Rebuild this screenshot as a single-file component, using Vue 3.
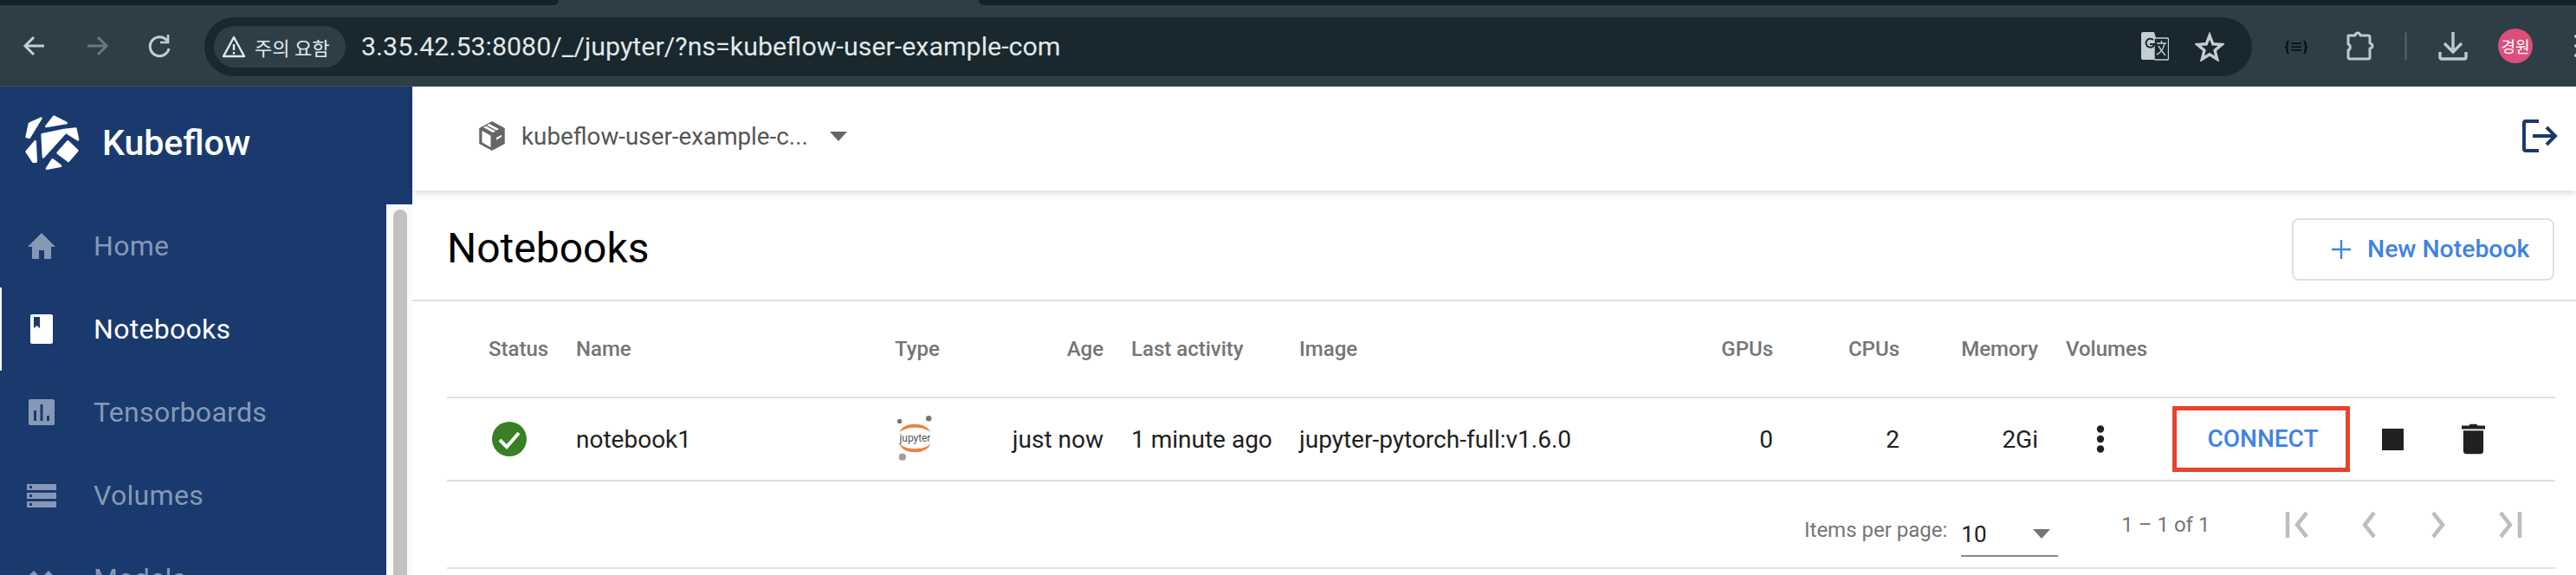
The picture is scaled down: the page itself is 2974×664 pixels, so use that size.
<script setup>
const headers = [
  { label: 'Status', cls: 'pad' },
  { label: 'Name' },
  { label: 'Type' },
  { label: 'Age', cls: 'right' },
  { label: 'Last activity' },
  { label: 'Image' },
  { label: 'GPUs', cls: 'right' },
  { label: 'CPUs', cls: 'right' },
  { label: 'Memory', cls: 'right' },
  { label: 'Volumes' },
  { label: '' }
]
</script>

<template>
  <div class="page">
    <div class="tabstrip">
      <div class="strip-dark strip-left"></div>
      <div class="strip-tab"></div>
      <div class="strip-dark strip-right"></div>
    </div>
    <div class="toolbar">
      <div class="nav-icons">
        <svg class="ic" viewBox="0 0 30 30" fill="none" stroke="#c2cfd4" stroke-width="3"><path d="M26 15H5M14 5L4 15l10 10"/></svg>
        <svg class="ic" viewBox="0 0 30 30" fill="none" stroke="#68787f" stroke-width="3"><path d="M4 15h21M16 5l10 10-10 10"/></svg>
        <svg class="ic" viewBox="0 0 30 30" fill="none" stroke="#c2cfd4" stroke-width="3"><path d="M24 9a11 11 0 1 0 2 9"/><path d="M25 2v9h-9" stroke-width="2.6"/></svg>
      </div>
      <div class="omnibox">
        <div class="chip">
          <svg class="warn" viewBox="0 0 28 28" fill="none" stroke="#e3e8ea" stroke-width="2.4"><path d="M14 3L2 25h24z" stroke-linejoin="round"/><path d="M14 11v7M14 20v2.5"/></svg>
          <span>주의 요함</span>
        </div>
        <span class="url">3.35.42.53:8080/_/jupyter/?ns=kubeflow-user-example-com</span>
        <svg class="translate" viewBox="0 0 32 33">
          <path d="M2 0h13l9 32H2a2 2 0 0 1-2-2V2a2 2 0 0 1 2-2z" fill="#c5cdd1"/>
          <rect x="15" y="7" width="16.5" height="25" rx="1.5" fill="#18282e" stroke="#c5cdd1" stroke-width="1.4"/>
          <path d="M14 9a5 5 0 1 0 1.4 5H10" fill="none" stroke="#18282e" stroke-width="2"/>
          <path d="M18 13h11M23.500 10v3M27 13c-1 6-5 11-9 13M20 16c2 4 5 8 8 11" fill="none" stroke="#c5cdd1" stroke-width="1.5"/>
        </svg>
        <svg class="star" viewBox="0 0 34 34" fill="none" stroke="#c5cdd1" stroke-width="3.400"><path d="M17 4l3.800 9.800 10.200.7-7.900 6.700 2.600 10.100L17 25.700 8.300 31.300l2.600-10.100L3 14.500l10.200-.7z"/></svg>
      </div>
      <div class="ext-icons">
        <span class="ext-code">{≡}</span>
        <svg class="puzzle" viewBox="0 0 34 34" fill="none" stroke="#b9cbd2" stroke-width="3"><path d="M4 5h8c1-4 5-4 6 0h9a2 2 0 0 1 2 2v7c4 1 4 5 0 6v10a2 2 0 0 1-2 2H6a2 2 0 0 1-2-2v-8c3-1 3-6 0-7z" stroke-linejoin="round"/></svg>
        <div class="sep"></div>
        <svg class="download" viewBox="0 0 34 34" fill="none" stroke="#b9cbd2" stroke-width="3.400"><path d="M17 1v22M7 14l10 10 10-10"/><path d="M2 24v6a2 2 0 0 0 2 2h26a2 2 0 0 0 2-2v-6"/></svg>
        <div class="avatar">경원</div>
        <div class="dots"><i></i><i></i><i></i></div>
      </div>
    </div>

    <div class="body">
      <aside class="sidebar">
        <div class="brand">
          <svg class="logo" viewBox="0 0 300 270" fill="#fff" stroke="#fff" stroke-width="8" stroke-linejoin="round">
            <polygon points="72,68 112,50 72,116 62,114"/>
            <polygon points="157,44 200,66 130,78"/>
            <polygon points="116,106 192,90 232,86 240,124 198,98 120,184"/>
            <polygon points="205,130 238,162 207,198 170,170"/>
            <polygon points="92,130 95,200 85,200 62,165"/>
            <polygon points="152,193 180,215 132,224"/>
          </svg>
          <span class="brand-name">Kubeflow</span>
        </div>
        <div class="side-rest">
          <nav class="nav">
            <div class="nav-item">
              <svg class="nav-ic" viewBox="0 0 34 34" fill="#8599b7"><path d="M17 2L1 18h5v14h8V22h6v10h8V18h5z"/></svg>
              <span>Home</span>
            </div>
            <div class="nav-item active">
              <svg class="nav-ic" viewBox="0 0 34 34"><path d="M6 0h22a2 2 0 0 1 2 2v30a2 2 0 0 1-2 2H6a2 2 0 0 1-2-2V2a2 2 0 0 1 2-2z" fill="#fff"/><path d="M8 3h7v13l-3.500-3L8 16z" fill="#1a3a6e"/></svg>
              <span>Notebooks</span>
            </div>
            <div class="nav-item">
              <svg class="nav-ic" viewBox="0 0 34 34"><rect x="2" y="2" width="30" height="30" rx="2" fill="#8599b7"/><path d="M8 15h3v12H8zM15.500 8h3v19h-3zM23 21h3v6h-3z" fill="#1a3a6e"/></svg>
              <span>Tensorboards</span>
            </div>
            <div class="nav-item">
              <svg class="nav-ic" viewBox="0 0 34 34" fill="#8599b7"><path d="M0 4h34v7H0zM0 14h34v7H0zM0 24h34v7H0z"/><path d="M3 6h3v3H3zM3 16h3v3H3zM3 26h3v3H3z" fill="#1a3a6e"/></svg>
              <span>Volumes</span>
            </div>
            <div class="nav-item">
              <svg class="nav-ic" viewBox="0 0 34 34" fill="#8599b7"><path d="M8 8l6 6H2zM25 8l6 6H19z"/></svg>
              <span>Models</span>
            </div>
          </nav>
          <div class="scroll-track"><div class="scroll-thumb"></div></div>
        </div>
      </aside>

      <main class="main">
        <header class="topbar">
          <svg class="box-ic" viewBox="0 0 32 34">
            <path d="M16 1L30 8.500V25.500L16 33 2 25.500V8.500z" fill="#666" stroke="#666" stroke-width="1.500" stroke-linejoin="round"/>
            <path d="M4.500 11l10 5.500v13.500l-10-5.500z" fill="#fff"/>
            <path d="M10 4.500l11 6 3-1.500-11-6zM6 7l11 6 3-1.500-11-6z" fill="#fff"/>
            <path d="M21 19l6-3.200v2.500l-6 3.200z" fill="#fff"/>
          </svg>
          <span class="ns">kubeflow-user-example-c...</span>
          <span class="ns-arrow"></span>
          <svg class="logout" viewBox="0 0 42 38" fill="none" stroke="#1a3a6e" stroke-width="4"><path d="M20 2H5a2 2 0 0 0-2 2v30a2 2 0 0 0 2 2h15"/><path d="M13 19h26M29 9l10 10-10 10"/></svg>
        </header>

        <div class="title-row">
          <h1>Notebooks</h1>
          <button class="new-btn">
            <svg class="plus" viewBox="0 0 24 24" fill="none" stroke="#3f83e0" stroke-width="2.400"><path d="M12 1v22M1 12h22"/></svg>
            New Notebook
          </button>
        </div>

        <div class="table">
          <div class="row head">
            <div v-for="h in headers" :key="h.label" class="cell" :class="h.cls">{{ h.label }}</div>
          </div>
          <div class="row item">
            <div class="cell pad-icon">
              <svg class="check" viewBox="0 0 40 40"><circle cx="20" cy="20" r="20" fill="#388023"/><path d="M9 21l8 8 14-16" fill="none" stroke="#fff" stroke-width="4"/></svg>
            </div>
            <div class="cell">notebook1</div>
            <div class="cell">
              <svg class="jupyter" viewBox="0 0 44 48">
                <path d="M5 18C8 6 34 6 38 18 31 11 12 11 5 18zM5 30c3 12 29 12 33 0-7 7-26 7-33 0z" fill="#e8843c"/>
                <circle cx="5" cy="6" r="2.500" fill="#767677"/>
                <circle cx="36" cy="3" r="3" fill="#767677"/>
                <circle cx="8" cy="44" r="3.800" fill="#9e9e9e"/>
                <text x="21.500" y="28" text-anchor="middle" class="jup-text">jupyter</text>
              </svg>
            </div>
            <div class="cell right">just now</div>
            <div class="cell">1 minute ago</div>
            <div class="cell">jupyter-pytorch-full:v1.6.0</div>
            <div class="cell right">0</div>
            <div class="cell right">2</div>
            <div class="cell right">2Gi</div>
            <div class="cell">
              <svg class="kebab" viewBox="0 0 10 32" fill="#212121"><circle cx="5" cy="4.500" r="4.200"/><circle cx="5" cy="16" r="4.200"/><circle cx="5" cy="27.500" r="4.200"/></svg>
            </div>
            <div class="cell actions">
              <div class="connect">CONNECT</div>
              <div class="stop"></div>
              <svg class="trash" viewBox="0 0 28 36" fill="#212121"><path d="M10 0h8l1 2h9v4H0V2h9zM2 8h24v24a4 4 0 0 1-4 4H6a4 4 0 0 1-4-4z"/></svg>
            </div>
          </div>
          <div class="footer">
            <span class="per-label">Items per page:</span>
            <div class="select">
              <span>10</span>
              <span class="select-arrow"></span>
            </div>
            <span class="range">1 – 1 of 1</span>
            <div class="pager">
              <svg viewBox="0 0 36 30" fill="none" stroke="#bdbdbd" stroke-width="4.500"><path d="M4 0v30M26 1L15 15l11 14"/></svg>
              <svg viewBox="0 0 36 30" fill="none" stroke="#bdbdbd" stroke-width="4.500"><path d="M24 1L13 15l11 14"/></svg>
              <svg viewBox="0 0 36 30" fill="none" stroke="#bdbdbd" stroke-width="4.500"><path d="M12 1l11 14-11 14"/></svg>
              <svg viewBox="0 0 36 30" fill="none" stroke="#bdbdbd" stroke-width="4.500"><path d="M10 1l11 14-11 14M32 0v30"/></svg>
            </div>
          </div>
        </div>
      </main>
    </div>
  </div>
</template>

<style>
html, body {
  margin: 0;
  background: #fff;
  overflow: hidden;
}
</style>

<style scoped>
.page {
  width: 2974px;
  height: 664px;
  overflow: hidden;
  display: flex;
  flex-direction: column;
  font-family: Roboto, "Noto Sans CJK KR", sans-serif;
}

.tabstrip {
  height: 6px;
  display: flex;
  background: #2d3e46;
}
.strip-dark {
  background: #112329;
}
.strip-left {
  width: 645px;
  border-bottom-right-radius: 6px;
}
.strip-tab {
  width: 485px;
}
.strip-right {
  flex: 1;
  border-bottom-left-radius: 6px;
}

.toolbar {
  height: 94px;
  box-sizing: border-box;
  background: #2d3e46;
  border-bottom: 1px solid #444a4d;
  display: flex;
  align-items: center;
}
.nav-icons {
  width: 236px;
  flex: none;
  box-sizing: border-box;
  padding-left: 25px;
  display: flex;
  gap: 42px;
}
.ic {
  width: 30px;
  height: 30px;
}
.omnibox {
  width: 2364px;
  flex: none;
  height: 68px;
  margin-top: 2px;
  background: #18282e;
  border-radius: 34px;
  display: flex;
  align-items: center;
  color: #e3e8ea;
}
.chip {
  margin-left: 11px;
  width: 152px;
  height: 48px;
  box-sizing: border-box;
  padding-left: 9px;
  border-radius: 24px;
  background: #2d3e46;
  display: flex;
  align-items: center;
  gap: 10px;
  font-size: 22px;
}
.warn {
  width: 28px;
  height: 28px;
}
.url {
  margin-left: 18px;
  font-size: 30.4px;
  flex: 1;
}
.translate {
  width: 32px;
  height: 33px;
}
.star {
  width: 34px;
  height: 34px;
  margin-left: 30px;
  margin-right: 32px;
}
.ext-icons {
  flex: 1;
  min-width: 0;
  display: flex;
  align-items: center;
}
.ext-icons > * {
  flex: none;
}
.ext-code {
  margin-left: 36px;
  width: 30px;
  text-align: center;
  font-size: 16px;
  font-weight: 700;
  color: #0a0a0a;
}
.puzzle {
  width: 34px;
  height: 34px;
  margin-left: 41px;
}
.sep {
  width: 3px;
  height: 32px;
  border-radius: 2px;
  margin-left: 35px;
  background: #4a5a62;
}
.download {
  width: 34px;
  height: 34px;
  margin-left: 36px;
}
.avatar {
  width: 40px;
  height: 40px;
  margin-left: 35px;
  border-radius: 50%;
  background: #dc4f7c;
  color: #fff;
  font-size: 18px;
  display: flex;
  align-items: center;
  justify-content: center;
}
.dots {
  margin-left: 48px;
  display: flex;
  flex-direction: column;
  gap: 7px;
}
.dots i {
  display: block;
  width: 4px;
  height: 4px;
  border-radius: 50%;
  background: #c2cfd4;
}

.body {
  flex: 1;
  min-height: 0;
  display: flex;
}
.sidebar {
  width: 476px;
  background: #1a3a6e;
  color: #8599b7;
  display: flex;
  flex-direction: column;
}
.brand {
  height: 136px;
  flex: none;
  display: flex;
  align-items: center;
}
.logo {
  width: 100px;
  height: 90px;
  margin-left: 10px;
  margin-top: -7px;
}
.brand-name {
  margin-left: 8px;
  margin-top: -7px;
  font-size: 41px;
  font-weight: 500;
  color: #fff;
}
.side-rest {
  flex: 1;
  min-height: 0;
  display: flex;
}
.nav {
  width: 446px;
}
.nav-item {
  height: 96px;
  box-sizing: border-box;
  padding-left: 31px;
  display: flex;
  align-items: center;
  gap: 43px;
  font-size: 32px;
  letter-spacing: 0.3px;
}
.nav-item.active {
  color: #fff;
  border-left: 2px solid #fff;
  padding-left: 29px;
}
.nav-ic {
  width: 34px;
  height: 34px;
  flex: none;
}
.scroll-track {
  width: 30px;
  box-sizing: border-box;
  padding: 6px 6px 0 8px;
  background: #fafafa;
}
.scroll-thumb {
  height: 100%;
  background: #c1c1c1;
  border-radius: 8px 8px 0 0;
}

.main {
  flex: 1;
  min-width: 0;
  display: flex;
  flex-direction: column;
}
.topbar {
  height: 120px;
  flex: none;
  box-sizing: border-box;
  padding: 0 21px 6px 76px;
  display: flex;
  align-items: center;
  box-shadow: 0 3px 8px rgba(0, 0, 0, 0.14);
  position: relative;
}
.box-ic {
  width: 32px;
  height: 34px;
}
.ns {
  margin-left: 18px;
  font-size: 27.8px;
  color: #555;
}
.ns-arrow {
  margin-left: 25px;
  border-left: 10px solid transparent;
  border-right: 10px solid transparent;
  border-top: 11px solid #666;
}
.logout {
  width: 42px;
  height: 38px;
  margin-left: auto;
}

.title-row {
  height: 128px;
  flex: none;
  box-sizing: border-box;
  padding: 7px 25px 0 40px;
  border-bottom: 2px solid #e0e0e0;
  display: flex;
  align-items: center;
  justify-content: space-between;
}
h1 {
  margin: 0;
  font-size: 48px;
  font-weight: 400;
  color: #000;
}
.new-btn {
  width: 303px;
  height: 72px;
  box-sizing: border-box;
  margin-top: 2px;
  padding: 0 0 0 43px;
  border: 2px solid #e0e0e0;
  border-radius: 8px;
  background: #fff;
  color: #3f83e0;
  font-family: inherit;
  font-size: 28.4px;
  font-weight: 500;
  display: flex;
  align-items: center;
  gap: 18px;
}
.plus {
  width: 24px;
  height: 24px;
}

.table {
  margin: 0 24px 0 40px;
}
.row {
  display: grid;
  grid-template-columns: 149px 368px 100px 173px 194px 400px 179px 146px 160px 123px 1fr;
  border-bottom: 2px solid #e0e0e0;
  align-items: center;
}
.head {
  height: 112px;
  box-sizing: border-box;
  color: #757575;
  font-size: 24px;
  font-weight: 500;
}
.item {
  height: 96px;
  box-sizing: border-box;
  color: #212121;
  font-size: 28px;
}
.cell.pad {
  padding-left: 48px;
}
.cell.pad-icon {
  padding-left: 52px;
}
.cell.right {
  text-align: right;
  padding-right: 32px;
}
.check {
  width: 40px;
  height: 40px;
  display: block;
}
.jupyter {
  width: 48px;
  height: 52px;
  display: block;
  margin-top: -2px;
}
.jup-text {
  font-size: 11px;
  fill: #555;
}
.kebab {
  width: 10px;
  height: 32px;
  display: block;
  margin-left: 35px;
}
.actions {
  display: flex;
  align-items: center;
}
.connect {
  width: 205px;
  height: 76px;
  box-sizing: border-box;
  border: 5px solid #e8432a;
  color: #3f83e0;
  font-size: 28px;
  font-weight: 500;
  display: flex;
  align-items: center;
  justify-content: center;
  padding-bottom: 2px;
  padding-left: 4px;
}
.stop {
  width: 25px;
  height: 25px;
  background: #212121;
  margin-left: 37px;
}
.trash {
  width: 27px;
  height: 36px;
  margin-left: 67px;
}

.footer {
  height: 101px;
  box-sizing: border-box;
  border-bottom: 2px solid #e0e0e0;
  padding-left: 1567px;
  display: flex;
  align-items: center;
  font-size: 24px;
  color: #757575;
}
.per-label {
  margin-top: 12px;
}
.select {
  width: 112px;
  height: 50px;
  box-sizing: border-box;
  margin-left: 16px;
  margin-top: 24px;
  border-bottom: 2px solid #8a8a8a;
  display: flex;
  justify-content: space-between;
  align-items: center;
  color: #212121;
  font-size: 26px;
  padding-right: 9px;
}
.select-arrow {
  border-left: 10px solid transparent;
  border-right: 10px solid transparent;
  border-top: 11px solid #757575;
}
.range {
  margin-left: 73px;
}
.pager {
  margin-left: 86px;
  display: flex;
  gap: 44px;
}
.pager svg {
  width: 36px;
  height: 30px;
}
</style>
